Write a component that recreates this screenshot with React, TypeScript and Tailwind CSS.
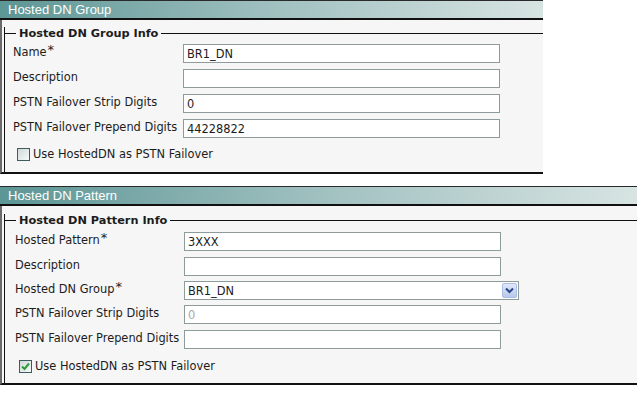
import type { ReactNode } from 'react';

type Row = {
  label: string;
  required?: boolean;
  value?: string;
  kind?: 'text' | 'disabled' | 'select';
  top: number;
};

function Checkbox({ checked }: { checked: boolean }) {
  return (
    <div className="flex h-[13px] w-[13px] items-center justify-center border border-[#3e5c5c] bg-gradient-to-br from-[#cfd8d8] to-[#f7f9f9]">
      {checked && (
        <svg width="9" height="9" viewBox="0 0 9 9">
          <path d="M1 4.5 L3.5 7 L8 1.5" stroke="#2f9a3a" strokeWidth="2" fill="none" />
        </svg>
      )}
    </div>
  );
}

function Field({ row, inputLeft }: { row: Row; inputLeft: number }) {
  return (
    <div className="flex h-[19px] items-start" style={{ marginTop: row.top }}>
      <div className="flex shrink-0 items-start pt-[1px] leading-[14px]" style={{ width: inputLeft }}>
        <span>{row.label}</span>
        {row.required && <span className="ml-[1px] -mt-[2px] text-[13px] leading-[14px]">*</span>}
      </div>
      {row.kind === 'select' ? (
        <div className="flex h-[19px] w-[335px] items-center justify-between border border-[#8e9b9b] bg-white pl-[3px] pr-[1px]">
          <span className="leading-[14px]">{row.value}</span>
          <div className="flex h-[15px] w-[15px] items-center justify-center rounded-[2px] border border-[#aabde4] bg-gradient-to-b from-[#e1e9f8] to-[#b8c8ec]">
            <svg width="9" height="7" viewBox="0 0 9 7">
              <path d="M1 1.5 L4.5 5 L8 1.5" stroke="#2b4684" strokeWidth="2" fill="none" />
            </svg>
          </div>
        </div>
      ) : (
        <div className="flex h-[19px] w-[317px] items-center border border-[#8e9b9b] bg-white pl-[3px]">
          <span className={row.kind === 'disabled' ? 'leading-[14px] text-[#a8a8a8]' : 'leading-[14px]'}>
            {row.value}
          </span>
        </div>
      )}
    </div>
  );
}

function Panel({
  title,
  legend,
  width,
  labelPad,
  inputLeft,
  rows,
  checked,
  legendTop,
  rowsTop,
  checkTop,
  bottomPad,
  children,
}: {
  title: string;
  legend: string;
  width: number;
  labelPad: number;
  inputLeft: number;
  rows: Row[];
  checked: boolean;
  legendTop: number;
  rowsTop: number;
  checkTop: number;
  bottomPad: number;
  children?: ReactNode;
}) {
  return (
    <div style={{ width }}>
      {/* header bar */}
      <div className="h-[20px] border-t border-b-2 border-t-[#2a2a2a] border-b-[#111] bg-gradient-to-r from-[#5c9695] via-[#a0c0c0] to-[#d7e4e2] pl-[8px] font-['Liberation_Sans',sans-serif] text-[13px] leading-[17px] text-white">
        {title}
      </div>
      <div className="border-b-2 border-l-2 border-b-[#111] border-l-[#6a6a6a] bg-[#f6f6f6]" style={{ paddingTop: legendTop }}>
        <div className="ml-[2px] border-l border-[#111]" style={{ paddingBottom: bottomPad }}>
          <div className="flex h-[13px] items-center">
            <div className="h-px w-[11px] bg-[#111]" />
            <span className="px-[3px] text-[11.3px] font-bold leading-[13px]">{legend}</span>
            <div className="h-px flex-1 bg-[#111]" />
          </div>
          <div style={{ paddingLeft: labelPad, paddingTop: rowsTop }}>
            {rows.map((r) => (
              <Field key={r.label + r.top} row={r} inputLeft={inputLeft} />
            ))}
            <div className="flex items-center gap-[3px] pl-[4px]" style={{ marginTop: checkTop }}>
              <Checkbox checked={checked} />
              <span className="leading-[14px]">Use HostedDN as PSTN Failover</span>
            </div>
          </div>
          {children}
        </div>
      </div>
    </div>
  );
}

export default function App() {
  const groupRows: Row[] = [
    { label: 'Name', required: true, value: 'BR1_DN', top: 0 },
    { label: 'Description', value: '', top: 6 },
    { label: 'PSTN Failover Strip Digits', value: '0', top: 6 },
    { label: 'PSTN Failover Prepend Digits', value: '44228822', top: 6 },
  ];

  const patternRows: Row[] = [
    { label: 'Hosted Pattern', required: true, value: '3XXX', top: 0 },
    { label: 'Description', value: '', top: 6 },
    { label: 'Hosted DN Group', required: true, value: 'BR1_DN', kind: 'select', top: 5 },
    { label: 'PSTN Failover Strip Digits', value: '0', kind: 'disabled', top: 5 },
    { label: 'PSTN Failover Prepend Digits', value: '', top: 6 },
  ];

  return (
    <div className="h-[396px] w-[641px] overflow-hidden bg-white font-['DejaVu_Sans',sans-serif] text-[11.4px] text-[#1c1c1c]">
      <Panel
        title="Hosted DN Group"
        legend="Hosted DN Group Info"
        width={543}
        labelPad={8}
        inputLeft={170}
        rows={groupRows}
        checked={false}
        legendTop={7}
        rowsTop={4}
        checkTop={9}
        bottomPad={11}
      />
      <div className="h-[12px]" />
      <Panel
        title="Hosted DN Pattern"
        legend="Hosted DN Pattern Info"
        width={637}
        labelPad={10}
        inputLeft={169}
        rows={patternRows}
        checked={true}
        legendTop={8}
        rowsTop={5}
        checkTop={10}
        bottomPad={10}
      />
    </div>
  );
}
